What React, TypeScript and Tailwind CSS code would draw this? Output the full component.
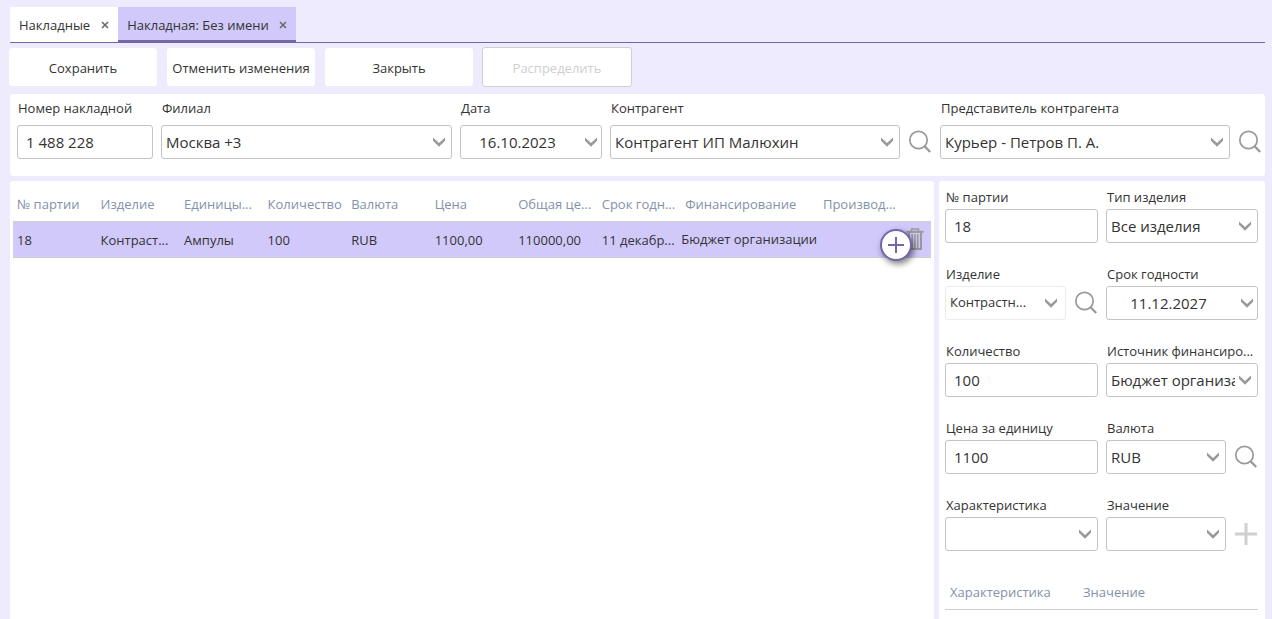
import { useId, type ReactNode } from "react";

function Chevron() {
  return (
    <svg viewBox="0 0 14 11" className="h-[11px] w-3.5" aria-hidden="true">
      <path d="M1 0.6v3.2l6 6 6-6V0.6l-6 5.4z" fill="#999" />
    </svg>
  );
}

function SearchButton({ label }: { label: string }) {
  return (
    <button type="button" aria-label={label} className="flex w-6 shrink-0 items-center justify-center">
      <svg viewBox="0 0 24 24" className="size-6" fill="none" stroke="#999" aria-hidden="true">
        <circle cx="10.5" cy="10" r="8.7" strokeWidth="1.7" />
        <path d="M16.6 16.2l5.6 5.8" strokeWidth="2.3" />
      </svg>
    </button>
  );
}

type FieldProps = { label: string; value: string; aside?: ReactNode; disabled?: boolean };

function Field({ label, control, aside }: { label: string; control: (id: string) => ReactNode; aside?: ReactNode }) {
  const id = useId();
  return (
    <div className="flex min-w-0 flex-col justify-between">
      <label htmlFor={id} className="block h-5 overflow-hidden pl-px text-[13px] leading-5 whitespace-nowrap">
        {label}
      </label>
      <div className="flex h-[34px] gap-2">
        {control(id)}
        {aside}
      </div>
    </div>
  );
}

function TextField({ label, value }: FieldProps) {
  return (
    <Field
      label={label}
      control={(id) => (
        <input
          id={id}
          type="text"
          defaultValue={value}
          className="w-full min-w-0 rounded-[3px] border border-[#c4c4c4] bg-white px-2 text-[15px] outline-none"
        />
      )}
    />
  );
}

function SelectField({ label, value, aside, disabled }: FieldProps) {
  return (
    <Field
      label={label}
      aside={aside}
      control={(id) => (
        <div className="relative min-w-0 flex-1">
          <select
            id={id}
            disabled={disabled}
            className={
              disabled
                ? "h-full w-full appearance-none rounded-[3px] border border-[#ebebeb] bg-white pr-5 pl-1 text-[13px] text-[#333] opacity-100"
                : "h-full w-full appearance-none rounded-[3px] border border-[#c4c4c4] bg-white pr-[22px] pl-1 text-[15px] text-[#333] outline-none"
            }
          >
            <option>{value}</option>
          </select>
          <span
            className={
              disabled
                ? "pointer-events-none absolute inset-y-0 right-2 flex items-center"
                : "pointer-events-none absolute inset-y-0 right-1.5 flex items-center"
            }
          >
            <Chevron />
          </span>
        </div>
      )}
    />
  );
}

function DateField({ label, value }: FieldProps) {
  return (
    <Field
      label={label}
      control={(id) => (
        <div className="flex w-full min-w-0 items-center rounded-[3px] border border-[#c4c4c4] bg-white pr-[3px]">
          <input
            id={id}
            type="text"
            defaultValue={value}
            className="h-full min-w-0 flex-1 bg-transparent pr-2.5 text-center text-[15px] outline-none"
          />
          <button type="button" aria-label="Открыть календарь">
            <Chevron />
          </button>
        </div>
      )}
    />
  );
}

function Tab({ title, active }: { title: string; active?: boolean }) {
  return (
    <div
      className={
        active
          ? "flex items-center gap-2.5 border-b-2 border-[#7566a9] bg-[#d1c9fa] px-[9px] pt-0.5"
          : "flex items-center gap-[11px] bg-white px-[9px]"
      }
    >
      <button type="button" role="tab" aria-selected={!!active} className="text-[13px] leading-5">
        {title}
      </button>
      <button type="button" aria-label="Закрыть вкладку" className="flex">
        <svg viewBox="0 0 8 8" className="size-2" stroke="#666" strokeWidth="1.5" aria-hidden="true">
          <path d="M1 1l6 6M7 1L1 7" />
        </svg>
      </button>
    </div>
  );
}

const actions = ["Сохранить", "Отменить изменения", "Закрыть"];
const headers = ["№ партии", "Изделие", "Единицы...", "Количество", "Валюта", "Цена", "Общая це...", "Срок годн..."];
const cells = ["18", "Контраст...", "Ампулы", "100", "RUB", "1100,00", "110000,00", "11 декабр..."];

export default function App() {
  return (
    <div className="flex h-screen flex-col overflow-hidden bg-[#eeebff] pt-[7px] pr-[7px] pl-2.5 font-['Open_Sans','Noto_Sans',sans-serif] text-[#333]">
      <nav role="tablist" className="flex h-9 shrink-0 border-b border-[#7566a9]">
        <Tab title="Накладные" />
        <Tab title="Накладная: Без имени" active />
      </nav>

      <div className="-ml-px flex h-[51px] shrink-0 items-center gap-2.5 pb-[3px]">
        {actions.map((a) => (
          <button
            key={a}
            type="button"
            className="h-[38px] w-[148px] rounded-[3px] bg-white pt-[3px] text-[13px] whitespace-nowrap"
          >
            {a}
          </button>
        ))}
        <button
          type="button"
          disabled
          className="-ml-px h-10 w-[150px] rounded-[3px] border border-[#cfcfcf] bg-white pt-[3px] text-[13px] text-[#cfcfcf]"
        >
          Распределить
        </button>
      </div>

      <section className="grid shrink-0 auto-rows-[61px] grid-cols-[136px_291fr_142px_322fr_322fr] gap-2 rounded-[3px] bg-white pt-1 pr-[3px] pb-[17px] pl-[7px]">
        <TextField label="Номер накладной" value="1 488 228" />
        <SelectField label="Филиал" value="Москва +3" />
        <DateField label="Дата" value="16.10.2023" />
        <SelectField label="Контрагент" value="Контрагент ИП Малюхин" aside={<SearchButton label="Найти контрагента" />} />
        <SelectField
          label="Представитель контрагента"
          value="Курьер - Петров П. А."
          aside={<SearchButton label="Найти представителя" />}
        />
      </section>

      <div className="mt-[5px] flex min-h-0 flex-1 gap-[5px]">
        <section className="relative min-w-0 flex-1 rounded-t-[3px] bg-white pt-[7px] pr-[3px] pl-[3px]">
          <table className="w-full table-fixed border-collapse text-left text-[13px] leading-5 whitespace-nowrap">
            <colgroup>
              {headers.map((h) => (
                <col key={h} className="w-[9.1%]" />
              ))}
              <col className="w-[15%]" />
              <col />
            </colgroup>
            <thead>
              <tr className="h-[33px] text-[#8292a9]">
                {headers.map((h) => (
                  <th key={h} className="overflow-hidden pl-1 font-normal">
                    {h}
                  </th>
                ))}
                <th className="pl-1 font-normal">Финансирование</th>
                <th className="pl-1 font-normal">Производ...</th>
              </tr>
            </thead>
            <tbody>
              <tr className="h-9 border-y border-[#cfcfcf] bg-[#d1c9fa]">
                {cells.map((c) => (
                  <td key={c} className="overflow-hidden pt-0.5 pl-1">
                    {c}
                  </td>
                ))}
                <td>Бюджет организации</td>
                <td>
                  <button type="button" aria-label="Удалить строку" className="ml-auto flex pr-[7px]">
                    <svg viewBox="0 0 18 22" className="h-[22px] w-[18px]" fill="none" stroke="#999" aria-hidden="true">
                      <path d="M5.5 3V1h7v2" strokeWidth="1.5" />
                      <path d="M0.5 3.8h17" strokeWidth="2.2" />
                      <path d="M3 5v16h12V5" strokeWidth="2" />
                      <path d="M6.2 6v15M9 6v15M11.8 6v15" strokeWidth="1.4" />
                    </svg>
                  </button>
                </td>
              </tr>
            </tbody>
          </table>
          <button
            type="button"
            aria-label="Добавить строку"
            className="absolute top-12 right-[22px] flex size-8 items-center justify-center rounded-full border-2 border-[#7566a9] bg-white shadow-[2px_3px_6px_rgba(0,0,0,0.5)]"
          >
            <svg viewBox="0 0 16 16" className="size-4" stroke="#7566a9" strokeWidth="2" aria-hidden="true">
              <path d="M8 0v16M0 8h16" />
            </svg>
          </button>
        </section>

        <aside className="w-[326px] shrink-0 rounded-t-[3px] bg-white pt-1.5 pr-[7px] pl-1.5">
          <div className="grid auto-rows-[56px] grid-cols-[153fr_152fr] gap-x-2 gap-y-[21px]">
            <TextField label="№ партии" value="18" />
            <SelectField label="Тип изделия" value="Все изделия" />
            <SelectField label="Изделие" value="Контрастн..." disabled aside={<SearchButton label="Найти изделие" />} />
            <DateField label="Срок годности" value="11.12.2027" />
            <TextField label="Количество" value="100" />
            <SelectField label="Источник финансиро..." value="Бюджет организации" />
            <TextField label="Цена за единицу" value="1100" />
            <SelectField label="Валюта" value="RUB" aside={<SearchButton label="Найти валюту" />} />
            <SelectField label="Характеристика" value="" />
            <SelectField
              label="Значение"
              value=""
              aside={
                <button type="button" aria-label="Добавить характеристику" className="flex w-6 items-center justify-center">
                  <svg viewBox="0 0 22 22" className="size-[22px]" stroke="#d0d0d0" strokeWidth="3" aria-hidden="true">
                    <path d="M11 0v22M0 11h22" />
                  </svg>
                </button>
              }
            />
          </div>
          <table className="mt-6 w-full table-fixed border-collapse text-left text-[13px] leading-5 text-[#8292a9]">
            <thead>
              <tr className="h-[34px] border-b border-[#cfcfcf]">
                <th className="w-[133px] pl-[5px] font-normal">Характеристика</th>
                <th className="pl-[5px] font-normal">Значение</th>
              </tr>
            </thead>
          </table>
        </aside>
      </div>
    </div>
  );
}
